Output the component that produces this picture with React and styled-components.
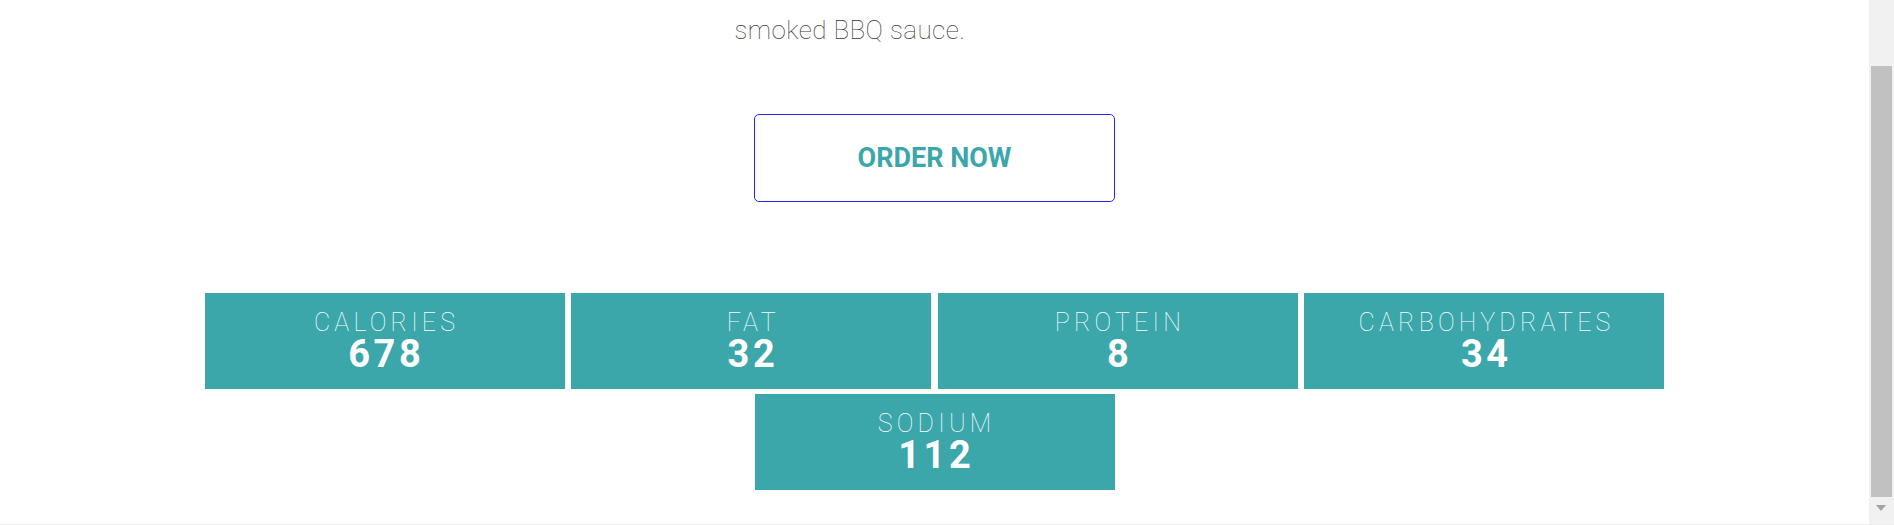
import React from "react";
import styled, { createGlobalStyle } from "styled-components";

const GlobalStyle = createGlobalStyle`
    html, body {
        margin: 0;
        padding: 0;
        background: #ffffff;
        overflow: hidden;
    }
    body {
        font-family: Roboto, "Liberation Sans", Arial, sans-serif;
    }
`

const Page = styled.div`
    width: 1869px;
    height: 525px;
    display: flex;
    flex-direction: column;
    align-items: center;
    box-sizing: border-box;
`

const Description = styled.p`
    width: 400px;
    margin: 13px 0 0;
    font-size: 26px;
    line-height: 35px;
    font-weight: 100;
    color: #3a3a3a;
    letter-spacing: 0.4px;
    text-align: left;
`

const OrderButton = styled.button`
    margin-top: 66px;
    width: 361px;
    height: 88px;
    background: #ffffff;
    border: 1px solid #2626f0;
    border-radius: 5px;
    font-family: Roboto, "Liberation Sans", Arial, sans-serif;
    font-size: 27px;
    font-weight: 700;
    color: #3ba7aa;
    cursor: pointer;
`

const Nutrition = styled.div`
    margin-top: 91px;
    width: 1461px;
    display: flex;
    flex-wrap: wrap;
    justify-content: center;
    column-gap: 6.67px;
    row-gap: 5px;
`

const Fact = styled.div`
    width: 360px;
    height: 96px;
    box-sizing: border-box;
    padding-bottom: 5px;
    background: #3ba7aa;
    color: #ffffff;
    display: flex;
    flex-direction: column;
    align-items: center;
    justify-content: center;
    gap: 1px;
`

const FactLabel = styled.span`
    font-size: 25px;
    line-height: 30px;
    font-weight: 100;
    letter-spacing: 4.2px;
    margin-right: -4.2px;
    text-transform: uppercase;
`

const FactValue = styled.span`
    font-size: 38px;
    line-height: 30px;
    font-weight: 700;
    letter-spacing: 3.5px;
    margin-right: -3.5px;
`

// fake browser scrollbar drawn over the right edge
const ScrollTrack = styled.div`
    position: fixed;
    top: 0;
    right: 0;
    width: 25px;
    height: 524px;
    background: #f1f1f1;
`

const ScrollThumb = styled.div`
    position: absolute;
    top: 66px;
    left: 2px;
    width: 21px;
    height: 431px;
    background: #c1c1c1;
`

const ScrollArrow = styled.div`
    position: absolute;
    top: 505px;
    left: 7px;
    width: 0;
    height: 0;
    border-left: 5.5px solid transparent;
    border-right: 5.5px solid transparent;
    border-top: 6px solid #a3a3a3;
`

const BottomEdge = styled.div`
    position: fixed;
    left: 0;
    right: 0;
    bottom: 0;
    height: 1px;
    background: #ececec;
`

const facts = [
    { label: "Calories", value: 678 },
    { label: "Fat", value: 32 },
    { label: "Protein", value: 8 },
    { label: "Carbohydrates", value: 34 },
    { label: "Sodium", value: 112 },
]

const App = () => {
    return (
        <>
            <GlobalStyle />
            <Page>
                <Description>smoked BBQ sauce.</Description>
                <OrderButton>ORDER NOW</OrderButton>
                <Nutrition>
                    {facts.map((f) => (
                        <Fact key={f.label}>
                            <FactLabel>{f.label}</FactLabel>
                            <FactValue>{f.value}</FactValue>
                        </Fact>
                    ))}
                </Nutrition>
            </Page>
            <ScrollTrack>
                <ScrollThumb />
                <ScrollArrow />
            </ScrollTrack>
            <BottomEdge />
        </>
    )
}

export default App
